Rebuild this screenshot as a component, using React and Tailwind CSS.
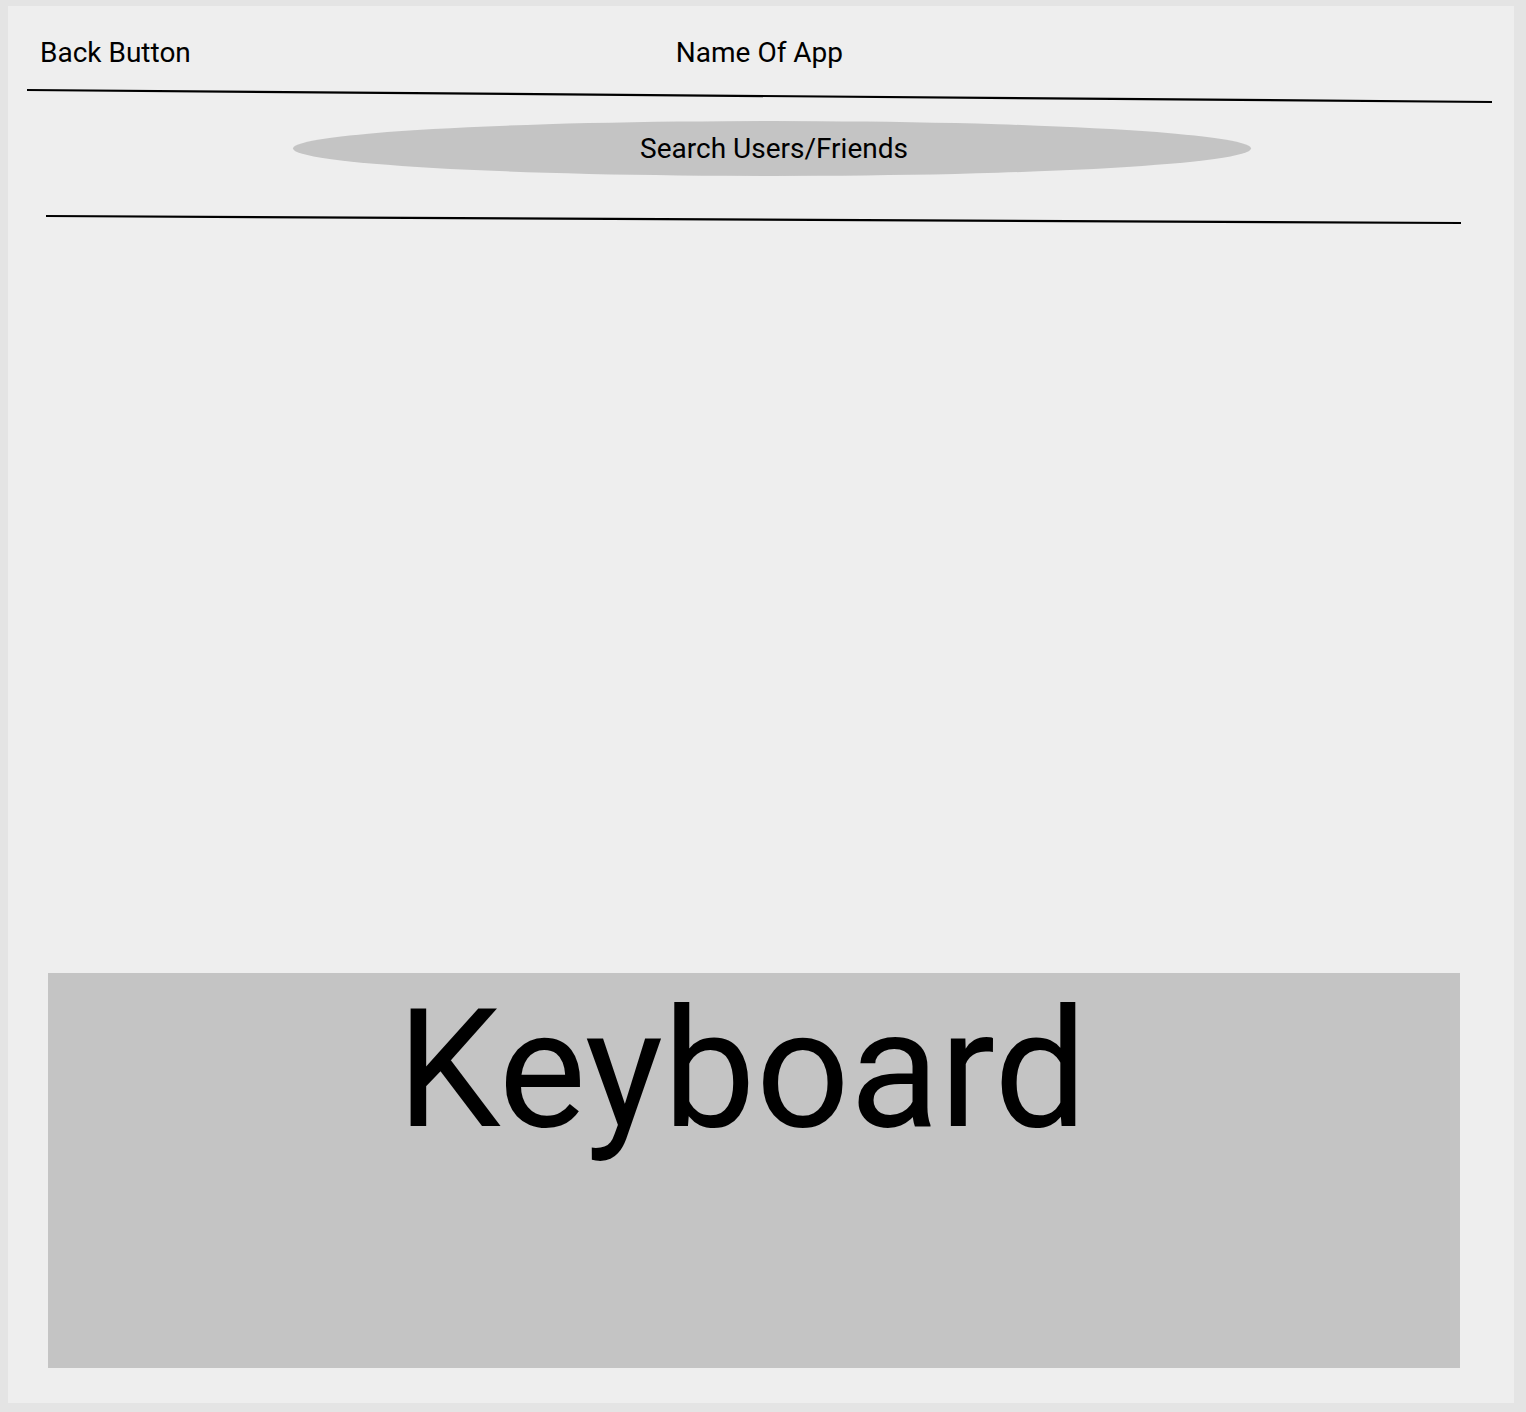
import React from "react";

const SketchLine = ({ x1, y1, x2, y2 }) => (
  <svg className="block w-full h-[16px]" viewBox="0 0 1506 16" preserveAspectRatio="none">
    <line x1={x1} y1={y1} x2={x2} y2={y2} stroke="#000" strokeWidth="2.2" />
  </svg>
);

export default function App() {
  return (
    <div className="h-[1412px] bg-[#e4e4e4] pt-[6px] pl-[8px] pr-[12px] pb-[9px] font-['Roboto',sans-serif] text-black">
      <div className="h-full bg-[#eeeeee] flex flex-col">
        <header className="flex pt-[33px] pl-[32px] text-[28px] leading-[28px]">
          <span>Back Button</span>
          <span className="ml-[485px]">Name Of App</span>
        </header>

        <div className="mt-[21px]">
          <SketchLine x1={19} y1={2} x2={1484} y2={14} />
        </div>

        <div className="mt-[17px] ml-[285px] w-[958px] h-[55px] rounded-[50%] bg-[#c4c4c4] flex items-center justify-center pl-[4px] text-[28px] leading-[28px]">
          Search Users/Friends
        </div>

        <div className="mt-[34px]">
          <SketchLine x1={38} y1={6} x2={1453} y2={13} />
        </div>

        <div className="mt-auto mb-[35px] ml-[40px] w-[1412px] h-[395px] bg-[#c4c4c4] flex justify-center pt-[14px] pr-[24px]">
          <span className="text-[165px] leading-none">Keyboard</span>
        </div>
      </div>
    </div>
  );
}
